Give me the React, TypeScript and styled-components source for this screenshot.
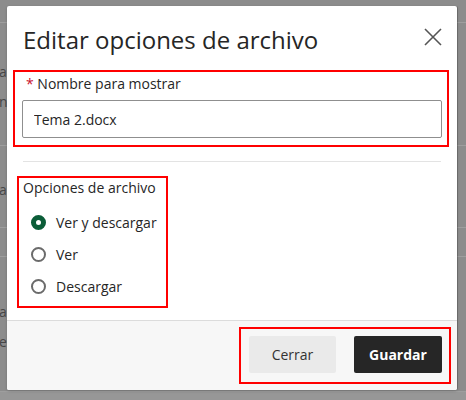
import React, {useState} from 'react'
import {styled, createGlobalStyle} from 'styled-components'

const GlobalStyle = createGlobalStyle`
  html, body {
    margin: 0;
    padding: 0;
    background: #8c8c8c;
    font-family: 'Open Sans', 'Liberation Sans', sans-serif;
    color: #262626;
  }
  * {
    box-sizing: border-box;
  }
`

type Option = 'ambos' | 'ver' | 'descargar'

const OPTIONS: {value: Option; label: string}[] = [
  {value: 'ambos', label: 'Ver y descargar'},
  {value: 'ver', label: 'Ver'},
  {value: 'descargar', label: 'Descargar'},
]

// the dimmed page that sits behind the dialog
const BACK_ROWS = [
  {height: 23, lines: []},
  {height: 123, lines: ['a', 'n']},
  {height: 82, lines: ['a']},
  {height: 29, lines: []},
  {height: 135, lines: ['a', 'es']},
]

const App: React.FC = () => {
  const [name, setName] = useState('Tema 2.docx')
  const [option, setOption] = useState<Option>('ambos')

  return (
    <>
      <GlobalStyle />
      <Page>
        <BackPage>
          {BACK_ROWS.map((row, i) => (
            <BackRow key={i} $height={row.height}>
              {row.lines.map((line, j) => (
                <BackText key={j}>{line}</BackText>
              ))}
            </BackRow>
          ))}
          <BackFooter />
        </BackPage>

        <Dialog role="dialog" aria-labelledby="dialog-title">
          <Header>
            <Title id="dialog-title">Editar opciones de archivo</Title>
            <CloseButton aria-label="Cerrar">
              <svg width="18" height="18" viewBox="0 0 18 18">
                <path
                  d="M1 1 L17 17 M17 1 L1 17"
                  stroke="#555"
                  strokeWidth="1.6"
                  fill="none"
                />
              </svg>
            </CloseButton>
          </Header>

          <Body>
            <Highlight $width={436} $padding="2px 5px 7px 7px">
              <Label htmlFor="display-name">
                <Required>*</Required> Nombre para mostrar
              </Label>
              <Input
                id="display-name"
                value={name}
                onChange={e => setName(e.target.value)}
              />
            </Highlight>

            <Divider />

            <Highlight $width={151} $padding="0 4px 4px 4px" $left={4}>
              <GroupTitle>Opciones de archivo</GroupTitle>
              <RadioList>
                {OPTIONS.map(o => (
                  <RadioRow key={o.value}>
                    <RadioDot
                      $checked={option === o.value}
                      onClick={() => setOption(o.value)}
                    />
                    <span>{o.label}</span>
                  </RadioRow>
                ))}
              </RadioList>
            </Highlight>
          </Body>

          <Footer>
            <Highlight $width={212} $padding="7px 7px 9px 8px">
              <ButtonGroup>
                <SecondaryButton>Cerrar</SecondaryButton>
                <PrimaryButton>Guardar</PrimaryButton>
              </ButtonGroup>
            </Highlight>
          </Footer>
        </Dialog>
      </Page>
    </>
  )
}

export default App

const Page = styled.div`
  position: relative;
  width: 466px;
  height: 400px;
  overflow: hidden;
  background: #8c8c8c;
`

const BackPage = styled.div`
  display: flex;
  flex-direction: column;
`

const BackRow = styled.div<{$height: number}>`
  height: ${p => p.$height}px;
  border-bottom: 1px solid #9e9e9e;
  display: flex;
  flex-direction: column;
  justify-content: center;
  gap: 10px;
  padding-top: 6px;
`

const BackText = styled.div`
  font-size: 14px;
  line-height: 20px;
  color: #474747;
  margin-left: -1px;
`

const BackFooter = styled.div`
  height: 20px;
  background: #979797;
`

const Dialog = styled.div`
  position: absolute;
  left: 7px;
  top: 6px;
  width: 450px;
  height: 384px;
  background: #fff;
  border-radius: 2px;
  box-shadow: 1px 0 0 rgba(0, 0, 0, 0.18), 0 1px 3px rgba(0, 0, 0, 0.2);
  display: flex;
  flex-direction: column;
  overflow: hidden;
`

const Header = styled.div`
  display: flex;
  align-items: flex-start;
  justify-content: space-between;
  padding: 18px 15px 0 16px;
  height: 64px;
`

const Title = styled.h2`
  margin: 0;
  font-size: 24px;
  line-height: 32px;
  font-weight: 400;
  color: #262626;
`

const CloseButton = styled.button`
  border: none;
  background: transparent;
  padding: 0;
  margin-top: 4px;
  width: 18px;
  height: 18px;
  display: flex;
  cursor: pointer;
`

const Body = styled.div`
  display: flex;
  flex-direction: column;
  padding-left: 6px;
  flex: 1;
`

const Highlight = styled.div<{$width: number; $padding: string; $left?: number}>`
  width: ${p => p.$width}px;
  margin-left: ${p => p.$left ?? 0}px;
  padding: ${p => p.$padding};
  border: 2px solid #ff0000;
`

const Label = styled.label`
  display: block;
  font-size: 14px;
  line-height: 20px;
  margin-left: 4px;
  color: #262626;
`

const Required = styled.span`
  color: #c8102e;
`

const Input = styled.input`
  display: block;
  width: 100%;
  height: 38px;
  margin-top: 6px;
  padding: 0 11px;
  border: 1px solid #8f8f8f;
  border-radius: 2px;
  font-family: 'Open Sans', 'Liberation Sans', sans-serif;
  font-size: 14px;
  color: #262626;
  outline: none;
`

const Divider = styled.hr`
  margin: 14px 10px 14px 10px;
  width: 418px;
  height: 1px;
  border: none;
  background: #e3e3e3;
  align-self: flex-start;
`

const GroupTitle = styled.div`
  font-size: 14px;
  line-height: 20px;
  color: #262626;
`

const RadioList = styled.div`
  display: flex;
  flex-direction: column;
  margin-top: 8px;
  padding-left: 8px;
`

const RadioRow = styled.label`
  display: flex;
  align-items: center;
  gap: 10px;
  height: 32px;
  font-size: 14px;
  color: #262626;
`

const RadioDot = styled.span<{$checked: boolean}>`
  width: 15px;
  height: 15px;
  border-radius: 50%;
  flex-shrink: 0;
  border: ${p => (p.$checked ? '5px solid #0b5d38' : '2px solid #6b6b6b')};
  background: #fff;
  cursor: pointer;
`

const Footer = styled.div`
  display: flex;
  justify-content: flex-end;
  padding: 6px 6px 6px 0;
  border-top: 1px solid #dcdcdc;
  background: #f7f7f7;
`

const ButtonGroup = styled.div`
  display: flex;
  gap: 18px;
`

const BaseButton = styled.button`
  height: 37px;
  border: none;
  border-radius: 2px;
  font-family: 'Open Sans', 'Liberation Sans', sans-serif;
  font-size: 14px;
  cursor: pointer;
`

const SecondaryButton = styled(BaseButton)`
  width: 87px;
  background: #eaeaea;
  color: #333;
`

const PrimaryButton = styled(BaseButton)`
  width: 88px;
  background: #262626;
  color: #fff;
  font-weight: 700;
`
